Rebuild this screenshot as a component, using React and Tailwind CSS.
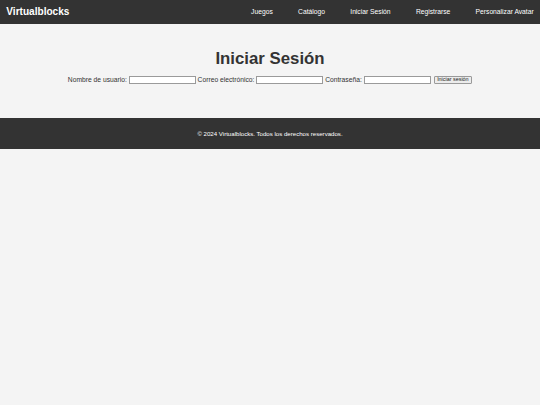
import React from 'react';

const navLinks = ['Juegos', 'Catálogo', 'Iniciar Sesión', 'Registrarse', 'Personalizar Avatar'];

function Field({ label, type = 'text' }) {
  return (
    <>
      <label className="leading-none">{label}</label>
      <input
        type={type}
        className="h-[8.2px] w-[67px] border border-[#9a9a9a] bg-white outline-none"
      />
    </>
  );
}

export default function App() {
  return (
    <div className="min-h-[405px] bg-[#f4f4f4] font-['Liberation_Sans',Arial,sans-serif] text-[#333]">
      <header className="flex h-[24.3px] items-center justify-between bg-[#333] px-[6.3px] text-white">
        <h1 className="text-[10.08px] font-bold leading-none">Virtualblocks</h1>
        <nav className="flex gap-[25.3px] text-[6.72px] leading-none">
          {navLinks.map((link) => (
            <a key={link} href="#" className="text-white">
              {link}
            </a>
          ))}
        </nav>
      </header>

      <main className="pt-[24.4px] pb-[33.4px] text-center">
        <h2 className="text-[16.8px] font-bold leading-[19px]">Iniciar Sesión</h2>
        <form className="mt-[8.4px] flex h-[8.2px] items-center justify-center gap-[1.9px] text-[6.72px]">
          <Field label="Nombre de usuario:" />
          <Field label="Correo electrónico:" type="email" />
          <Field label="Contraseña:" type="password" />
          <button
            type="button"
            className="ml-px h-[7.4px] rounded-[1px] border border-[#9a9a9a] bg-[#ececec] px-[2.6px] text-[5.4px] leading-none text-[#222]"
          >
            Iniciar sesión
          </button>
        </form>
      </main>

      <footer className="flex h-[31px] items-center justify-center bg-[#333] pt-px text-[6.1px] leading-none text-white">
        <p>© 2024 Virtualblocks. Todos los derechos reservados.</p>
      </footer>
    </div>
  );
}
